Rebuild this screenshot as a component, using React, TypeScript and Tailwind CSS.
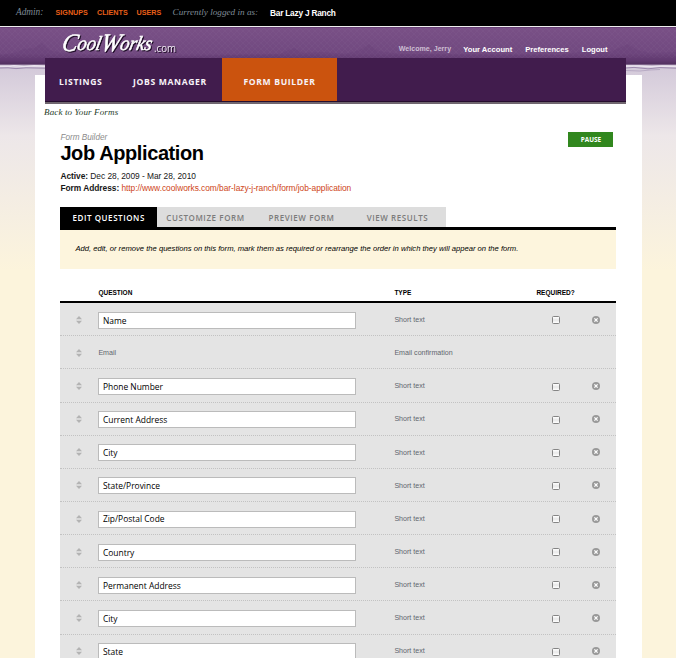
import React from "react";

const SANS = "font-['Liberation_Sans',Arial,sans-serif]";
const SERIF = "font-['Liberation_Serif',Georgia,serif]";
const HUMANIST = "font-['Open_Sans','Noto_Sans',sans-serif]";

type Question = { label: string; type: string; fixed?: boolean };

const questions: Question[] = [
  { label: "Name", type: "Short text" },
  { label: "Email", type: "Email confirmation", fixed: true },
  { label: "Phone Number", type: "Short text" },
  { label: "Current Address", type: "Short text" },
  { label: "City", type: "Short text" },
  { label: "State/Province", type: "Short text" },
  { label: "Zip/Postal Code", type: "Short text" },
  { label: "Country", type: "Short text" },
  { label: "Permanent Address", type: "Short text" },
  { label: "City", type: "Short text" },
  { label: "State", type: "Short text" },
];

function Logo() {
  return (
    <svg className="block h-[28px] w-[120px] overflow-visible drop-shadow-[1px_1px_0_#1d0c25]" viewBox="0 0 120 28" aria-label="CoolWorks.com">
      <text
        x="0"
        y="22.5"
        transform="translate(3.8 0) skewX(-12)"
        fill="#fff"
        stroke="#fff"
        strokeWidth="0.55"
        fontFamily="'Liberation Serif', serif"
        fontStyle="italic"
        fontSize="20"
        textLength="90"
        lengthAdjust="spacingAndGlyphs"
      >
        <tspan fontSize="25">C</tspan>ool<tspan fontSize="25">W</tspan>orks
      </text>
      <text x="92" y="23.5" fill="#f1eaf3" fontFamily="'Open Sans', sans-serif" fontSize="11.5" textLength="22" lengthAdjust="spacingAndGlyphs">.com</text>
    </svg>
  );
}

/* Purple masthead texture: faint hills and a torn lower edge */
function Backdrop() {
  return (
    <svg className="absolute inset-x-0 top-[28px] h-[50px] w-full" viewBox="0 0 676 50" preserveAspectRatio="none">
      <defs>
        <linearGradient id="mast" x1="0" y1="0" x2="0" y2="1">
          <stop offset="0" stopColor="#795086" />
          <stop offset="0.7" stopColor="#714980" />
          <stop offset="0.9" stopColor="#613a70" />
          <stop offset="1" stopColor="#51305f" />
        </linearGradient>
        <pattern id="weave" width="6" height="6" patternUnits="userSpaceOnUse">
          <path d="M0 0L6 6M6 0L0 6" stroke="#8a6496" strokeWidth="0.7" opacity="0.22" />
        </pattern>
      </defs>
      <rect width="676" height="36" fill="url(#mast)" />
      <rect width="676" height="30" fill="url(#weave)" />
      <path d="M0 27L14 25L24 21L34 20L42 15L49 22L62 25L110 28L200 28L280 26L294 20L303 25L322 24L345 26L360 22L369 16L378 23L400 26L560 27L585 23L610 24L628 16L637 22L650 25L676 24V36H0Z" fill="#5d376d" opacity="0.18" />
      <rect y="36" width="676" height="1.2" fill="#7d6389" />
      <path d="M0 38.3H10L14 37.6L24 38.6L34 37.8L45 38.3M626 38H640L652 38.8L662 38L676 38.3" fill="none" stroke="#ebe4ef" strokeWidth="1.4" />
      <path d="M0 40L8 39.8L16 40.6L26 39.8L45 40.2M626 40L634 39.4L648 40.8L660 39.6L676 40.2" fill="none" stroke="#86709a" strokeWidth="0.9" opacity="0.8" />
      <path d="M626 42.5L640 43L650 42L660 41.5" fill="none" stroke="#a394b3" strokeWidth="0.6" />
    </svg>
  );
}

function Sorter() {
  return (
    <svg className="h-[8px] w-[6px]" viewBox="0 0 6 8" fill="#b3b3b3">
      <path d="M3 0L6 3.3H0Z" />
      <path d="M0 4.7H6L3 8Z" />
    </svg>
  );
}

function Remove() {
  return (
    <svg className="h-[8px] w-[8px]" viewBox="0 0 8 8">
      <circle cx="4" cy="4" r="4" fill="#999" />
      <path d="M2.4 2.4L5.6 5.6M5.6 2.4L2.4 5.6" stroke="#fff" strokeWidth="1.3" />
    </svg>
  );
}

function Row({ q }: { q: Question }) {
  return (
    <div className="flex h-[33.15px] shrink-0 items-center border-b border-dotted border-[#c2c2c2] text-[7.1px] text-[#5f666e]">
      <div className="flex w-[38px] justify-center pt-px"><Sorter /></div>
      <div className="w-[296px]">
        {q.fixed ? (
          <div className="pt-[2px]">{q.label}</div>
        ) : (
          <div className={`${HUMANIST} mt-[2px] flex h-[17px] w-[258px] items-center border border-[#bbb] bg-white pl-[3.5px] pt-px text-[8.45px] font-medium leading-none text-black`}>
            {q.label}
          </div>
        )}
      </div>
      <div className="w-[136.5px] pt-[2px]">{q.type}</div>
      {!q.fixed && (
        <>
          <div className="flex w-[51px] justify-center pt-[2px]">
            <div className="h-[8px] w-[8px] rounded-[1.5px] border border-[#858585] bg-linear-to-b from-white via-[#e8e8e8] to-white" />
          </div>
          <div className="flex w-[29px] justify-center pt-px"><Remove /></div>
        </>
      )}
    </div>
  );
}

export default function App() {
  return (
    <div className={`${SANS} relative h-[658px] w-[676px] overflow-hidden bg-[#fcf4dc]`}>
      <div className="absolute inset-x-0 top-[64px] h-[206px] bg-linear-to-b from-[#d2c8d9] via-[#ede7e9] via-35% to-[#fcf4dc]" />
      <Backdrop />
      <div className="relative flex h-full flex-col">
        <div className="flex h-[26px] shrink-0 items-center whitespace-nowrap bg-black pl-[16px] text-[7.2px] leading-none">
          <span className={`${SERIF} w-[39.5px] text-[9.3px] italic text-[#7f8b96]`}>Admin:</span>
          <span className="w-[41.5px] font-bold text-[#e85f18]">SIGNUPS</span>
          <span className="w-[39.5px] font-bold text-[#e85f18]">CLIENTS</span>
          <span className="w-[36px] font-bold text-[#e85f18]">USERS</span>
          <span className={`${SERIF} w-[97.5px] text-[9.2px] italic text-[#7f8b96]`}>Currently logged in as:</span>
          <span className="text-[8.3px] font-bold tracking-[-0.22px] text-white">Bar Lazy J Ranch</span>
        </div>
        <div className="h-[2px] shrink-0 border-t border-[#eee] bg-[#694077]" />
        <header className="flex h-[30px] shrink-0 justify-between pl-[62px] pr-[68.5px]">
          <Logo />
          <div className="flex whitespace-nowrap pt-[17px] text-[7.6px] font-bold leading-[9px] text-white">
            <span className="w-[64.5px] text-[7.1px] text-[#cebfd3]">Welcome, Jerry</span>
            <span className="w-[62px]">Your Account</span>
            <span className="w-[56.5px]">Preferences</span>
            <span>Logout</span>
          </div>
        </header>

        <div className="relative ml-[35px] h-[600px] w-[607px] shrink-0">
          <div className="flex h-full flex-col bg-linear-to-b from-transparent from-[17px] to-white to-[17px]">
            <nav className={`${HUMANIST} ml-[10px] flex h-[46px] w-[581px] shrink-0 border-b-2 border-[#70666f] bg-[#411c4d] text-[8.6px] font-bold leading-[48px] tracking-[0.65px] text-[#f7f2f8] shadow-[inset_0_-1px_#260d2e]`}>
              <span className="w-[88px] pl-[14px]">LISTINGS</span>
              <span className="w-[89px] whitespace-nowrap">JOBS MANAGER</span>
              <span className="flex h-[43px] w-[115px] justify-center bg-[#cb530e]">
                <span className="whitespace-nowrap">FORM BUILDER</span>
              </span>
            </nav>
            <div className={`${SERIF} h-[28px] shrink-0 pl-[9px] pt-[3px] text-[9px] italic leading-[11px] tracking-[0.13px] text-[#263c29]`}>Back to Your Forms</div>
            <main className="ml-[25.4px] flex w-[555.6px] flex-col">
              <div className="flex h-[38px] shrink-0 justify-between">
                <div>
                  <div className="text-[8.2px] italic leading-[11px] text-[#8b8b8b]">Form Builder</div>
                  <h1 className="text-[20px] font-bold leading-[20px] tracking-[-0.4px] text-black">Job Application</h1>
                </div>
                <button className={`${HUMANIST} mr-[2.5px] h-[15px] w-[45px] bg-[#31871e] text-[6.4px] font-bold leading-[15px] text-white`}>PAUSE</button>
              </div>
              <div className="h-[37px] shrink-0 text-[8.4px] leading-[12px] tracking-[-0.04px] text-[#171717]">
                <div><b>Active:</b> Dec 28, 2009 - Mar 28, 2010</div>
                <div><b>Form Address:</b> <span className="text-[#ce4518]">http://www.coolworks.com/bar-lazy-j-ranch/form/job-application</span></div>
              </div>
              <div className={`${HUMANIST} flex h-[23px] shrink-0 whitespace-nowrap border-b-[3px] border-black text-[8px] font-semibold leading-[21px] tracking-[0.58px] text-[#7b7b7b]`}>
                <span className="w-[96.6px] bg-black text-center text-white">EDIT QUESTIONS</span>
                <span className="w-[97px] bg-[#ddd] text-center">CUSTOMIZE FORM</span>
                <span className="w-[95px] bg-[#ddd] text-center">PREVIEW FORM</span>
                <span className="w-[97px] bg-[#ddd] text-center">VIEW RESULTS</span>
              </div>
              <div className="h-[38.5px] shrink-0 bg-[#fdf5dd] pl-[15px] text-[7.63px] italic leading-[38px] text-black">
                Add, edit, or remove the questions on this form, mark them as required or rearrange the order in which they will appear on the form.
              </div>
              <div className="flex h-[34.7px] shrink-0 border-b-2 border-black pt-[19.4px] text-[6.5px] font-bold leading-[10px] text-black">
                <span className="ml-[38px] w-[296px]">QUESTION</span>
                <span className="w-[142px]">TYPE</span>
                <span>REQUIRED?</span>
              </div>
              <div className="bg-[#e4e4e4]">
                {questions.map((q, i) => <Row key={i} q={q} />)}
              </div>
            </main>
          </div>
        </div>
      </div>
    </div>
  );
}
